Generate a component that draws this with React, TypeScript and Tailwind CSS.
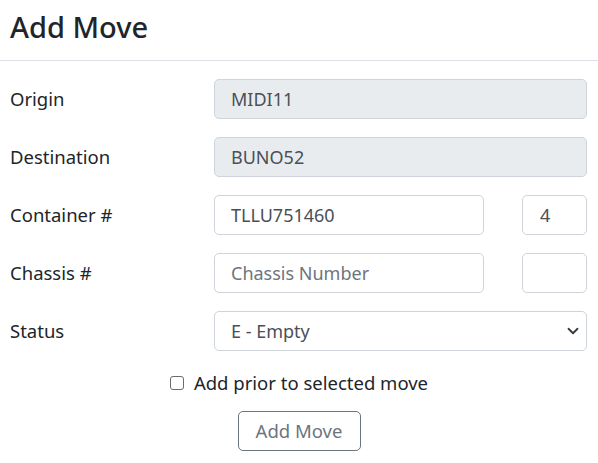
import React from 'react';

const font = { fontFamily: '"Noto Sans", "Open Sans", sans-serif' };

interface RowProps {
  label: string;
  children: React.ReactNode;
}

const Row: React.FC<RowProps> = ({ label, children }) => (
  <div className="flex items-center h-10">
    <label className="w-[214px] pl-[10px] text-[18.5px] text-[#212529]">{label}</label>
    <div className="flex-1 flex gap-[38px] pr-[11px]">{children}</div>
  </div>
);

const inputBase =
  'h-10 rounded-[5px] border border-[#ced4da] px-4 text-[18px] text-[#495057] outline-none placeholder:text-[#6c757d]';

export default function App() {
  return (
    <div className="w-[598px] h-[463px] bg-white" style={font}>
      <div className="h-[61px] flex items-center pl-[10px] pb-[6px] border-b border-[#dee2e6]">
        <h4 className="text-[29px] font-medium text-[#212529]">Add Move</h4>
      </div>
      <div className="flex flex-col gap-[18px] pt-[18px]">
        <Row label="Origin">
          <input readOnly value="MIDI11" className={`${inputBase} w-full bg-[#e9ecef]`} />
        </Row>
        <Row label="Destination">
          <input readOnly value="BUNO52" className={`${inputBase} w-full bg-[#e9ecef]`} />
        </Row>
        <Row label="Container #">
          <input readOnly value="TLLU751460" className={`${inputBase} w-[270px] bg-white`} />
          <input readOnly value="4" className={`${inputBase} w-[65px] bg-white px-[17px]`} />
        </Row>
        <Row label="Chassis #">
          <input placeholder="Chassis Number" className={`${inputBase} w-[270px] bg-white`} />
          <input className={`${inputBase} w-[65px] bg-white`} />
        </Row>
        <Row label="Status">
          <div className={`${inputBase} w-full bg-white flex items-center justify-between pr-[7px]`}>
            <span>E - Empty</span>
            <svg width="12" height="12" viewBox="0 0 16 16" fill="none">
              <path d="M2 5l6 6 6-6" stroke="#343a40" strokeWidth="2.4" strokeLinecap="round" strokeLinejoin="round" />
            </svg>
          </div>
        </Row>
      </div>
      <div className="flex items-center justify-center gap-[10px] mt-[18px]">
        <span className="w-[14px] h-[14px] border border-[#6b6b6b] rounded-[3px] bg-white" />
        <span className="text-[18.5px] text-[#212529]">Add prior to selected move</span>
      </div>
      <div className="flex justify-center mt-[14px]">
        <button className="h-10 w-[123px] rounded-[5px] border border-[#6c757d] text-[18.5px] text-[#6c757d] bg-white">
          Add Move
        </button>
      </div>
    </div>
  );
}
